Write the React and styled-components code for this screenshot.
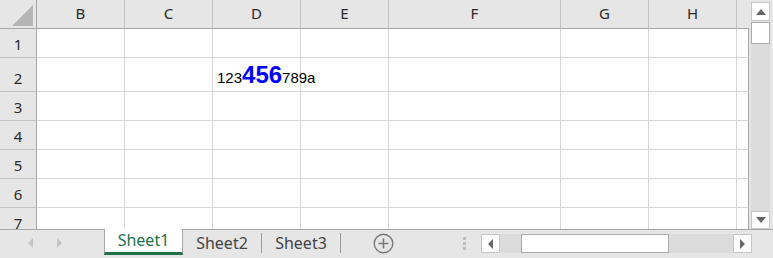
import React from "react";
import styled, { createGlobalStyle } from "styled-components";

const columns = [
  { name: "B", width: 88 },
  { name: "C", width: 88 },
  { name: "D", width: 88 },
  { name: "E", width: 88 },
  { name: "F", width: 172 },
  { name: "G", width: 88 },
  { name: "H", width: 88 },
  { name: "", width: 12, edge: true },
];

const rows = [
  { n: 1, h: 29 },
  { n: 2, h: 34 },
  { n: 3, h: 29 },
  { n: 4, h: 29 },
  { n: 5, h: 29 },
  { n: 6, h: 29 },
  { n: 7, h: 29 },
];

const sheets = ["Sheet1", "Sheet2", "Sheet3"];

function App() {
  return (
    <>
      <Global />
      <Window>
        <Main>
          <Sheet
            $cols={columns.map((c) => `${c.width}px`).join(" ")}
            $rows={rows.map((r) => `${r.h}px`).join(" ")}
          >
            <Corner>
              <CornerMark />
            </Corner>
            {columns.map((c, i) => (
              <ColHead key={i} $edge={c.edge}>
                {c.name}
              </ColHead>
            ))}
            {rows.map((r) => (
              <React.Fragment key={r.n}>
                <RowHead>{r.n}</RowHead>
                {columns.map((c, i) => (
                  <Cell key={i} $edge={c.edge}>
                    {r.n === 2 && c.name === "D" && (
                      <CellText>
                        123<Big>456</Big>789a
                      </CellText>
                    )}
                  </Cell>
                ))}
              </React.Fragment>
            ))}
          </Sheet>
          <VScroll>
            <ScrollButton $h={19}>
              <Arrow $dir="up" />
            </ScrollButton>
            <VThumb />
            <VTrack />
            <ScrollButton $h={18}>
              <Arrow $dir="down" />
            </ScrollButton>
          </VScroll>
        </Main>
        <TabBar>
          <Nav>
            <Arrow $dir="left" $light />
            <Arrow $dir="right" $light />
          </Nav>
          {sheets.map((s, i) =>
            i === 0 ? (
              <ActiveTab key={s}>{s}</ActiveTab>
            ) : (
              <React.Fragment key={s}>
                <Tab>{s}</Tab>
                <TabDivider />
              </React.Fragment>
            )
          )}
          <AddSheet>
            <svg width="21" height="21" viewBox="0 0 21 21">
              <circle cx="10.5" cy="10.5" r="9.3" fill="none" stroke="#787878" strokeWidth="1.4" />
              <path d="M10.5 5.5v10M5.5 10.5h10" stroke="#787878" strokeWidth="1.6" />
            </svg>
          </AddSheet>
          <Grip>
            <i />
            <i />
            <i />
          </Grip>
          <HScroll>
            <ScrollButton $w={19}>
              <Arrow $dir="left" />
            </ScrollButton>
            <HTrack>
              <HThumb />
            </HTrack>
            <ScrollButton $w={19}>
              <Arrow $dir="right" />
            </ScrollButton>
          </HScroll>
        </TabBar>
      </Window>
    </>
  );
}

export default App;

const Global = createGlobalStyle`
  html, body {
    margin: 0;
    padding: 0;
    background: #e6e6e6;
  }
  * {
    box-sizing: border-box;
  }
`;

const Window = styled.div`
  width: 773px;
  height: 258px;
  display: flex;
  flex-direction: column;
  background: #e6e6e6;
  font-family: "Noto Sans", "Open Sans", sans-serif;
  overflow: hidden;
`;

const Main = styled.div`
  height: 229px;
  display: flex;
  overflow: hidden;
`;

const Sheet = styled.div`
  width: 749px;
  display: grid;
  grid-template-columns: 37px ${(p) => p.$cols};
  grid-template-rows: 29px ${(p) => p.$rows};
  align-content: start;
`;

const Corner = styled.div`
  position: relative;
  background: #e6e6e6;
  border-right: 1px solid #a6a6a6;
  border-bottom: 1px solid #a6a6a6;
`;

const CornerMark = styled.div`
  position: absolute;
  left: 12px;
  top: 5px;
  width: 21px;
  height: 21px;
  background: #b5b5b5;
  clip-path: polygon(100% 0, 100% 100%, 0 100%);
`;

const ColHead = styled.div`
  display: flex;
  align-items: center;
  justify-content: center;
  padding-bottom: 2px;
  background: #e6e6e6;
  border-bottom: 1px solid #a6a6a6;
  border-right: ${(p) => (p.$edge ? "none" : "1px solid #c2c2c2")};
  color: #2b2b2b;
  font-size: 15px;
`;

const RowHead = styled.div`
  display: flex;
  align-items: flex-end;
  justify-content: center;
  padding-bottom: 3px;
  background: #e6e6e6;
  border-right: 1px solid #a6a6a6;
  border-bottom: 1px solid #c2c2c2;
  color: #2b2b2b;
  font-size: 15px;
  line-height: 20px;
`;

const Cell = styled.div`
  display: flex;
  align-items: flex-end;
  padding: 0 0 2px 4px;
  background: #fff;
  border-right: 1px solid ${(p) => (p.$edge ? "#a6a6a6" : "#d6d6d6")};
  border-bottom: 1px solid #d6d6d6;
  overflow: visible;
  position: relative;
`;

const CellText = styled.span`
  position: relative;
  z-index: 1;
  white-space: nowrap;
  font-family: "Liberation Sans", Arial, sans-serif;
  font-size: 15px;
  color: #000;
`;

const Big = styled.span`
  font-size: 24px;
  font-weight: bold;
  color: #0000ff;
`;

const VScroll = styled.div`
  width: 24px;
  display: flex;
  flex-direction: column;
  padding: 2px 3px 0 2px;
`;

const VThumb = styled.div`
  height: 22px;
  margin-top: 1px;
  background: #fff;
  border: 1px solid #ababab;
`;

const VTrack = styled.div`
  flex: 1;
  background: #dbdbdb;
`;

const ScrollButton = styled.div`
  display: flex;
  align-items: center;
  justify-content: center;
  flex: none;
  ${(p) => (p.$h ? `height: ${p.$h}px;` : "")}
  ${(p) => (p.$w ? `width: ${p.$w}px;` : "")}
  background: #fff;
  border: 1px solid #c6c6c6;
`;

const arrowShapes = {
  up: "border-width: 0 5px 6px 5px; border-bottom-color: COLOR;",
  down: "border-width: 6px 5px 0 5px; border-top-color: COLOR;",
  left: "border-width: 5px 5px 5px 0; border-right-color: COLOR;",
  right: "border-width: 5px 0 5px 5px; border-left-color: COLOR;",
};

const Arrow = styled.span`
  width: 0;
  height: 0;
  border-style: solid;
  border-color: transparent;
  ${(p) => arrowShapes[p.$dir].replace("COLOR", p.$light ? "#c4c4c4" : "#666")}
`;

const TabBar = styled.div`
  height: 29px;
  display: flex;
  border-top: 1px solid #a6a6a6;
  font-size: 16px;
`;

const Nav = styled.div`
  width: 104px;
  display: flex;
  align-items: center;
  gap: 24px;
  padding: 0 0 2px 28px;
`;

const ActiveTab = styled.div`
  width: 79px;
  height: 26px;
  margin-top: -1px;
  display: flex;
  align-items: center;
  justify-content: center;
  padding-bottom: 1px;
  background: #fff;
  border-left: 1px solid #a6a6a6;
  border-right: 1px solid #a6a6a6;
  border-bottom: 3px solid #217346;
  color: #217346;
`;

const Tab = styled.div`
  width: 78px;
  height: 25px;
  display: flex;
  align-items: center;
  justify-content: center;
  color: #444;
`;

const TabDivider = styled.div`
  width: 1px;
  height: 20px;
  margin-top: 3px;
  background: #9a9a9a;
`;

const AddSheet = styled.div`
  margin-left: 32px;
  display: flex;
  align-items: center;
  padding-bottom: 2px;
`;

const Grip = styled.div`
  margin-left: 69px;
  padding-top: 7px;
  display: flex;
  flex-direction: column;
  gap: 2px;

  i {
    display: block;
    width: 3px;
    height: 3px;
    background: #bdbdbd;
  }
`;

const HScroll = styled.div`
  margin-left: 15px;
  margin-top: 4px;
  width: 271px;
  height: 19px;
  display: flex;
`;

const HTrack = styled.div`
  flex: 1;
  display: flex;
  padding-left: 21px;
  background: #dbdbdb;
`;

const HThumb = styled.div`
  width: 148px;
  background: #fff;
  border: 1px solid #ababab;
`;
